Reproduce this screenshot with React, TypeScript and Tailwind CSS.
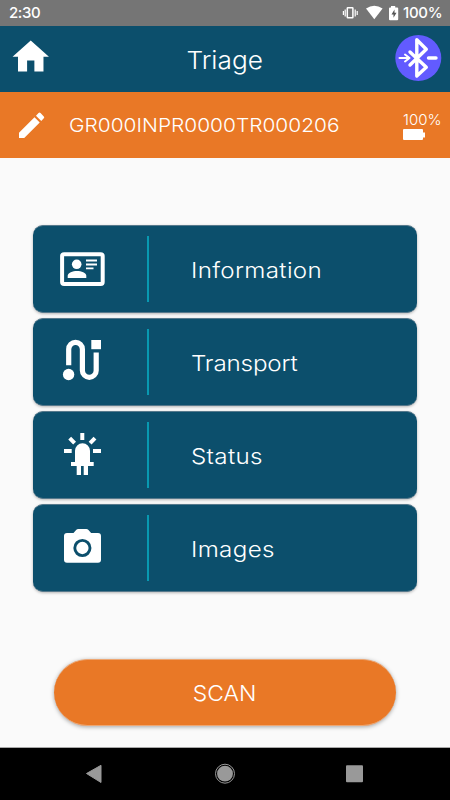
import React from "react";

const FONT = "font-['Inter','Noto_Sans',sans-serif]";

function StatusBar() {
  return (
    <div className="flex h-[26px] items-center bg-[#757575] pl-[9px] pr-[9px] font-medium text-white">
      <span className="pt-[1px] text-[15px] tracking-[-0.4px]">2:30</span>
      <svg className="ml-auto" width="60" height="26" viewBox="340 0 60 26">
        <g fill="none" stroke="#fff">
          <rect x="347.3" y="7.8" width="5.6" height="10" strokeWidth="1.5" rx="0.5" />
          <path d="M345.2 9.5v7M343.4 11v4M355.2 9.5v7M357.2 11v4" strokeWidth="1.2" />
        </g>
        <path fill="#fff" d="M366 8.600Q374.300 2.800 382.600 8.600L374.300 19.200Z" />
        <path fill="#fff" d="M391 6h4.200v1.500h2q1 0 1 1v10.700q0 1-1 1h-7.200q-1 0-1-1V8.500q0-1 1-1h1z" />
        <path fill="#555" d="M394.500 9.500l-3 5h2v3.200l3-5h-2z" />
      </svg>
      <span className="ml-[3px] w-[38px] whitespace-nowrap pt-[1px] text-[15px] tracking-[-0.3px]">100%</span>
    </div>
  );
}

function Header() {
  return (
    <header className="flex h-[66px] items-center bg-[#0c4f6c] text-white">
      <svg width="60" height="66" viewBox="0 26 60 66">
        <path fill="#fff" transform="translate(8.900 35) scale(1.820)" d="M10 20v-6h4v6h5v-8h3L12 3 2 12h3v8z" />
      </svg>
      <h1 className="flex-1 pt-[2px] text-center text-[24.5px] font-light">
        <span className="inline-block scale-x-[1.07]">Triage</span>
      </h1>
      <svg width="60" height="66" viewBox="390 26 60 66">
        <circle cx="418.300" cy="58" r="23" fill="#625bff" />
        <g fill="none" stroke="#fff" strokeWidth="3.400" strokeLinecap="round" strokeLinejoin="round">
          <path d="M410 52L426.300 67.300L416.800 76V39.800L426.300 49.300L410 65" />
          <path d="M428.500 58h7.500" strokeWidth="3.400" />
          <path d="M399.500 58h10M405 54.500l4.500 3.500l-4.500 3.500" strokeWidth="2" />
        </g>
      </svg>
    </header>
  );
}

function DeviceBar() {
  return (
    <div className="flex h-[66px] items-center bg-[#e97826] text-white">
      <svg width="69" height="66" viewBox="0 92 69 66">
        <path fill="#fff" transform="translate(14.800 108.500) scale(1.400)" d="M3 17.250V21h3.750L17.810 9.940l-3.750-3.750L3 17.250zM20.710 7.040a.996.996 0 0 0 0-1.410l-2.340-2.340a.996.996 0 0 0-1.410 0l-1.830 1.830 3.750 3.750 1.830-1.830z" />
      </svg>
      <span className="origin-left scale-x-[1.1] whitespace-nowrap pt-[2px] text-[19px] font-light">
        GR000INPR0000TR000206
      </span>
      <div className="ml-auto mr-[9px] flex w-[38px] flex-col items-start pt-[2px]">
        <span className="text-[15px] font-light leading-[18px]">100%</span>
        <svg width="24" height="12" viewBox="0 0 24 12">
          <path fill="#fff" d="M1 0h18q1 0 1 1v2.500h2v5h-2V10q0 1-1 1H1q-1 0-1-1V1q0-1 1-1z" />
        </svg>
      </div>
    </div>
  );
}

const icons = {
  information: (
    <svg width="64" height="60" viewBox="50 239 64 60" fill="#fff">
      <rect x="62.100" y="254.300" width="40.600" height="29.700" rx="2" fill="none" stroke="#fff" strokeWidth="4" />
      <circle cx="76.700" cy="264.300" r="4.800" />
      <path d="M67.700 278v-2.200c0-3 5-4.800 9.300-4.800s9.300 1.800 9.300 4.800v2.200z" />
      <path d="M86 260.500h11M86 264.500h11M86 268.400h7.500" stroke="#fff" strokeWidth="1.800" />
    </svg>
  ),
  transport: (
    <svg width="64" height="60" viewBox="50 332 64 60" fill="#fff">
      <path d="M68.700 365.200V349.200a6.850 6.850 0 0 1 13.700 0V370.400a6.900 6.900 0 0 0 13.800 0V352.500" fill="none" stroke="#fff" strokeWidth="5.200" />
      <circle cx="68.600" cy="374.500" r="5.700" />
      <rect x="91.300" y="340" width="9.700" height="9.200" />
    </svg>
  ),
  status: (
    <svg width="64" height="60" viewBox="50 425 64 60" fill="#fff">
      <path d="M75 462v-11.200a7.500 7.500 0 0 1 15 0V462h3.700v4H88v9h-4.300v-9H81v9h-4.300v-9H71v-4z" />
      <path d="M82.300 433v7M64 451h7.700M93 451h8M69.700 438.200l4.900 5M95 438.200l-4.900 5" fill="none" stroke="#fff" strokeWidth="4" />
    </svg>
  ),
  images: (
    <svg width="64" height="60" viewBox="50 518 64 60" fill="#fff">
      <path d="M67 533h6.500l2.600-3q.9-1 2.200-1h8q1.300 0 2.200 1l2.600 3H98q3 0 3 3v23.700q0 3-3 3H67q-3 0-3-3V536q0-3 3-3z" />
      <circle cx="82.400" cy="548" r="7.600" fill="none" stroke="#0c4f6c" strokeWidth="2.900" />
    </svg>
  ),
};

function MenuCard({ icon, label, tracking }: { icon: React.ReactNode; label: string; tracking: string }) {
  return (
    <button className="flex h-[88px] w-full items-center rounded-[10px] border-y border-[#56798c] bg-[#0c4f6c] pl-[17px] text-white shadow-[0_1px_3px_rgba(0,0,0,0.28)]">
      {icon}
      <span className="ml-[33px] h-[66px] w-[2px] bg-[#0899b1]" />
      <span className={`ml-[42px] origin-left scale-x-[1.1] pt-[2px] text-[22px] font-light ${tracking}`}>{label}</span>
    </button>
  );
}

function NavBar() {
  return (
    <nav className="h-[53px] border-t border-[#a8a8a8] bg-black">
      <svg width="450" height="52" viewBox="0 748 450 52" fill="#999">
        <path d="M86.500 773.500L101 765.300V782.500z" stroke="#999" strokeWidth="1" strokeLinejoin="round" />
        <circle cx="225" cy="773.700" r="7.900" />
        <circle cx="225" cy="773.700" r="9.500" fill="none" stroke="#999" strokeWidth="1" />
        <rect x="346" y="765.200" width="17" height="17" rx="1" />
      </svg>
    </nav>
  );
}

export default function App() {
  return (
    <div className={`flex h-[800px] w-[450px] flex-col overflow-hidden bg-[#fafafa] ${FONT}`}>
      <StatusBar />
      <Header />
      <DeviceBar />
      <main className="flex flex-1 flex-col items-center pt-[67px]">
        <div className="flex w-[384px] flex-col gap-[5px]">
          <MenuCard icon={icons.information} label="Information" tracking="tracking-[0.3px]" />
          <MenuCard icon={icons.transport} label="Transport" tracking="tracking-[-0.15px]" />
          <MenuCard icon={icons.status} label="Status" tracking="tracking-[0.3px]" />
          <MenuCard icon={icons.images} label="Images" tracking="tracking-[0.3px]" />
        </div>
        <button className="mt-[67px] h-[67px] w-[342px] rounded-full border-y border-[#eda672] bg-[#e97826] pt-[2px] text-[22px] font-light text-white shadow-[0_1px_4px_rgba(0,0,0,0.35)]">
          <span className="inline-block scale-x-[1.04]">SCAN</span>
        </button>
      </main>
      <NavBar />
    </div>
  );
}
